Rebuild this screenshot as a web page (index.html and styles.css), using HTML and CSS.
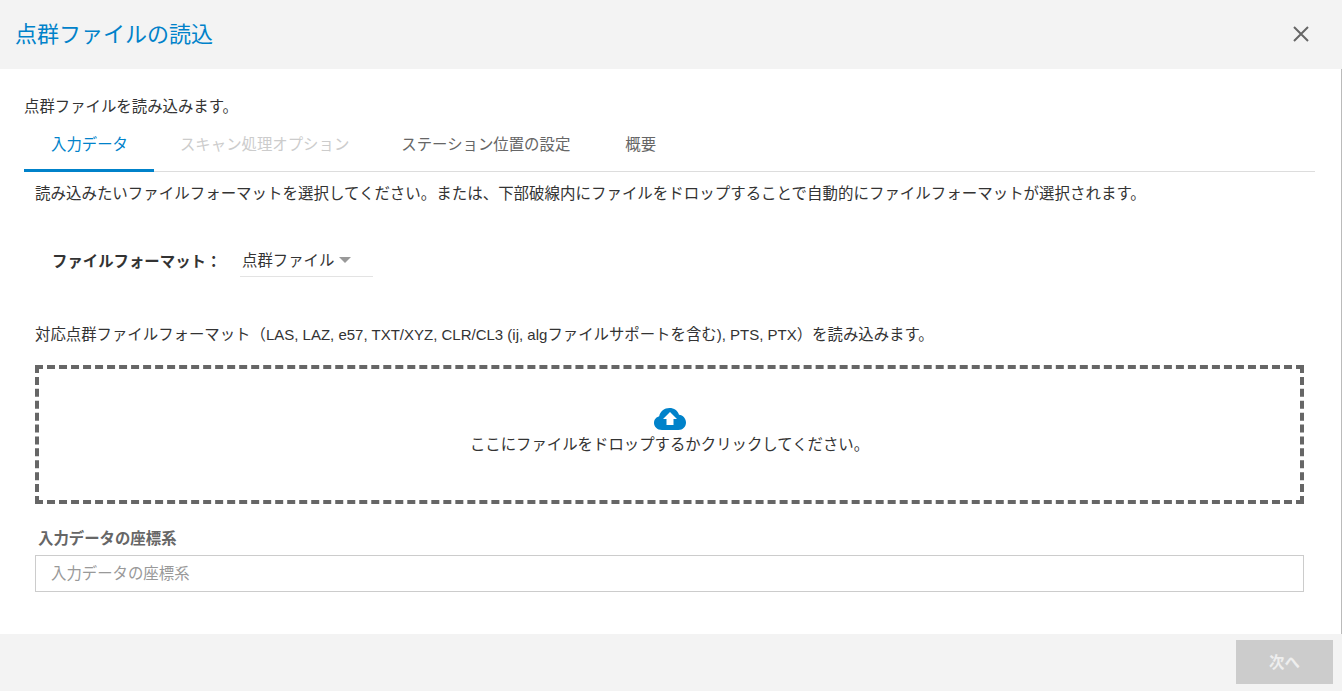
FILE: index.html
```html
<!DOCTYPE html>
<html lang="ja">
<head>
    <meta charset="UTF-8">
    <meta name="viewport" content="width=device-width, initial-scale=1.0">
    <title>点群ファイルの読込</title>
    <link rel="stylesheet" href="styles.css">
</head>
<body>
    <div class="dialog">
        <header class="dialog-header">
            <h1>点群ファイルの読込</h1>
            <button class="close-btn" type="button" aria-label="閉じる">
                <svg width="16" height="16" viewBox="0 0 16 16">
                    <path d="M1 1 L15 15 M15 1 L1 15" stroke="#666" stroke-width="2" fill="none"/>
                </svg>
            </button>
        </header>

        <main class="dialog-body">
            <p class="intro">点群ファイルを読み込みます。</p>
            <nav class="tabs">
                <a class="tab active">入力データ</a>
                <a class="tab disabled">スキャン処理オプション</a>
                <a class="tab">ステーション位置の設定</a>
                <a class="tab">概要</a>
            </nav>
            <p class="hint">読み込みたいファイルフォーマットを選択してください。または、下部破線内にファイルをドロップすることで自動的にファイルフォーマットが選択されます。</p>

            <div class="format-row">
                <label class="format-label">ファイルフォーマット：</label>
                <div class="format-select">点群ファイル<span class="caret"></span></div>
            </div>

            <p class="support">対応点群ファイルフォーマット（<span class="latin">LAS, LAZ, e57, TXT/XYZ, CLR/CL3 (ij, alg</span>ファイルサポートを含む<span class="latin">), PTS, PTX</span>）を読み込みます。</p>

            <div class="dropzone">
                <svg class="cloud" width="32" height="22" viewBox="0 0 32 22">
                    <path d="M8 22 C3 22 0 18.500 0 15 C0 11.500 2.200 9 5.200 8.200 C6 3.500 10.500 0 15.500 0 C20 0 23.800 2.600 25 6.800 C29 7.300 32 10.500 32 14.500 C32 18.800 28.800 22 24.500 22 Z" fill="#0082ca"/>
                    <path d="M16 4 L23 11 L19.500 11 L19.500 17 L12.500 17 L12.500 11 L9 11 Z" fill="#fff"/>
                </svg>
                <div>ここにファイルをドロップするかクリックしてください。</div>
            </div>

            <div class="field">
                <label class="field-label">入力データの座標系</label>
                <input class="field-input" type="text" placeholder="入力データの座標系">
            </div>
        </main>

        <footer class="dialog-footer">
            <button class="next-btn" type="button" disabled>次へ</button>
        </footer>
    </div>
</body>
</html>
```

FILE: styles.css
```css
* {
    box-sizing: border-box;
}
html, body {
    height: 100%;
}
body {
    margin: 0;
    font-family: "Liberation Sans", "Noto Sans CJK JP", sans-serif;
    font-size: 15.4px;
    color: #333;
    background-color: #fff;
}
p {
    margin: 0;
}
.latin {
    font-size: 15px;
}
.dialog {
    display: flex;
    flex-direction: column;
    height: 691px;
    overflow: hidden;
}
.dialog-header {
    display: flex;
    justify-content: space-between;
    align-items: center;
    height: 69px;
    flex-shrink: 0;
    padding: 0 33px 2px 15px;
    background-color: #f3f3f3;
}
.dialog-header h1 {
    margin: 0 0 4px;
    font-size: 22px;
    font-weight: 400;
    color: #0082ca;
}
.close-btn {
    display: flex;
    padding: 0;
    border: none;
    background: none;
    cursor: pointer;
}
.dialog-body {
    flex: 1;
    padding: 27px 26px 0 24px;
    border-right: 1px solid #bbb;
}
.intro {
    line-height: 22px;
}
.tabs {
    display: flex;
    height: 54px;
    border-bottom: 1px solid #ddd;
}
.tab {
    padding: 14px 26px 0;
    line-height: 26px;
    color: #666;
    cursor: pointer;
}
.tab:last-child {
    padding-left: 29px;
}
.tab.active {
    padding-left: 27px;
    color: #0082ca;
    border-bottom: 3px solid #0082ca;
    height: 54px;
}
.tab.disabled {
    color: #ccc;
}
.hint {
    padding: 11px 0 0 11px;
    font-size: 15.47px;
    line-height: 22px;
}
.format-row {
    display: flex;
    align-items: center;
    margin-top: 39px;
    padding-left: 28px;
}
.format-label {
    width: 188px;
    margin-bottom: 2px;
    font-weight: 700;
}
.format-select {
    width: 133px;
    height: 33px;
    padding: 5px 0 0 2px;
    line-height: 24px;
    border-bottom: 1px solid #e3e3e3;
}
.caret {
    display: inline-block;
    margin: 0 0 3px 5px;
    border-left: 6px solid transparent;
    border-right: 6px solid transparent;
    border-top: 6px solid #999;
}
.support {
    margin-top: 47px;
    padding-left: 11px;
    line-height: 22px;
}
.dropzone {
    display: flex;
    flex-direction: column;
    align-items: center;
    justify-content: center;
    height: 139px;
    margin: 19px 11px 0;
    padding-bottom: 5px;
    border: 4px dashed #666;
    cursor: pointer;
    line-height: 22px;
    color: #333;
}
.cloud {
    margin-bottom: 4px;
}
.field {
    margin: 24px 11px 0;
}
.field-label {
    display: block;
    padding-left: 3px;
    line-height: 22px;
    font-weight: 700;
    color: #666;
}
.field-input {
    display: block;
    width: 100%;
    height: 37px;
    margin-top: 5px;
    padding: 0 15px;
    font: inherit;
    border: 1px solid #ccc;
    outline: none;
}
.field-input::placeholder {
    color: #999;
}
.dialog-footer {
    display: flex;
    justify-content: flex-end;
    align-items: flex-start;
    height: 57px;
    flex-shrink: 0;
    padding: 6px 9px 0 0;
    background-color: #f3f3f3;
}
.next-btn {
    width: 97px;
    height: 44px;
    padding-bottom: 4px;
    font: inherit;
    font-weight: 700;
    color: #eee;
    background-color: #ccc;
    border: none;
}
```
